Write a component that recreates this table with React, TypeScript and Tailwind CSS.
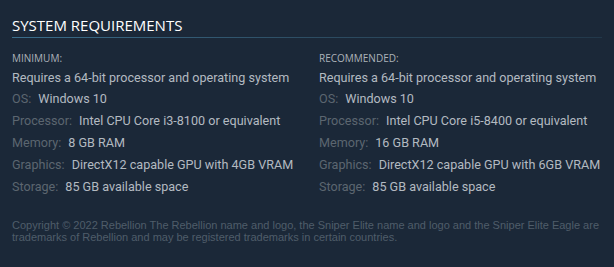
import React from 'react';

type Spec = { label: string; value: string };

const minimum: Spec[] = [
  { label: 'OS:', value: 'Windows 10' },
  { label: 'Processor:', value: 'Intel CPU Core i3-8100 or equivalent' },
  { label: 'Memory:', value: '8 GB RAM' },
  { label: 'Graphics:', value: 'DirectX12 capable GPU with 4GB VRAM' },
  { label: 'Storage:', value: '85 GB available space' },
];

const recommended: Spec[] = [
  { label: 'OS:', value: 'Windows 10' },
  { label: 'Processor:', value: 'Intel CPU Core i5-8400 or equivalent' },
  { label: 'Memory:', value: '16 GB RAM' },
  { label: 'Graphics:', value: 'DirectX12 capable GPU with 6GB VRAM' },
  { label: 'Storage:', value: '85 GB available space' },
];

function ReqColumn({ title, specs }: { title: string; specs: Spec[] }) {
  return (
    <div>
      <div className="text-[10px] leading-[12px] uppercase text-[#acb2b8] mb-[5px]">{title}</div>
      <ul className="text-[12.6px] leading-[18px] text-[#b3bac1] whitespace-nowrap font-['Roboto',sans-serif]">
        <li className="mb-[3px]">Requires a 64-bit processor and operating system</li>
        {specs.map((s) => (
          <li key={s.label} className="mb-[4px]">
            <span className="text-[#5c6670] mr-[7px]">{s.label}</span>
            {s.value}
          </li>
        ))}
      </ul>
    </div>
  );
}

export default function App() {
  return (
    <div className="w-[614px] h-[267px] bg-[#1b2838] px-3 pt-[15px] font-['Open_Sans',sans-serif]">
      {/* Header */}
      <h2 className="text-[15px] leading-[20px] uppercase text-white">
        System Requirements
      </h2>
      <div className="h-px mt-[2px] bg-gradient-to-r from-[#3b6e8c] via-[#2d4d63] to-[#22384a]" />

      {/* Columns */}
      <div className="grid grid-cols-[307px_1fr] mt-[14px]">
        <ReqColumn title="Minimum:" specs={minimum} />
        <ReqColumn title="Recommended:" specs={recommended} />
      </div>

      {/* Footer */}
      <p className="mt-[19px] text-[11px] leading-[12px] text-[#4f5d6a] font-['Liberation_Sans',Arial,sans-serif]">
        Copyright © 2022 Rebellion The Rebellion name and logo, the Sniper Elite name and logo and the Sniper Elite Eagle are
        trademarks of Rebellion and may be registered trademarks in certain countries.
      </p>
    </div>
  );
}
